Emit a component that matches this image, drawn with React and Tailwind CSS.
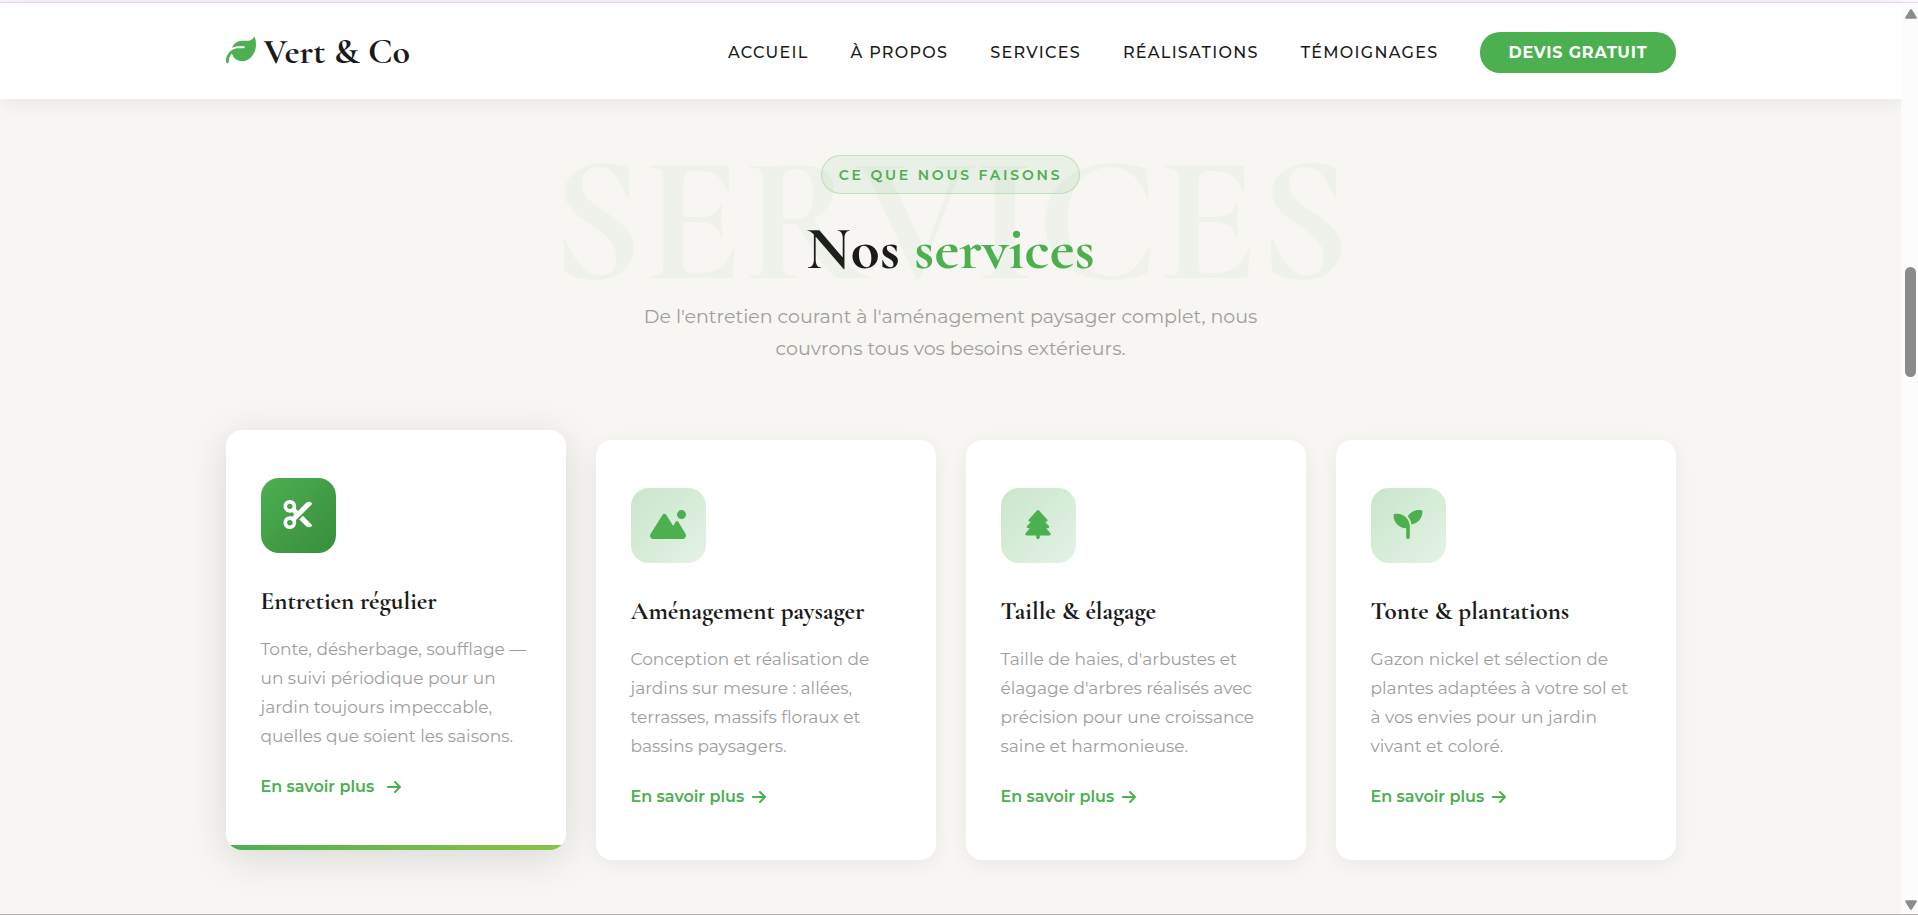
import React from 'react';
import { FaArrowRight, FaLeaf, FaMountainSun, FaScissors, FaSeedling, FaTree } from 'react-icons/fa6';
import clsx from 'clsx';

const NAV = ['Accueil', 'À propos', 'Services', 'Réalisations', 'Témoignages'];

const SERVICES = [
  {
    icon: FaScissors,
    title: 'Entretien régulier',
    text: 'Tonte, désherbage, soufflage — un suivi périodique pour un jardin toujours impeccable, quelles que soient les saisons.',
    active: true,
  },
  {
    icon: FaMountainSun,
    title: 'Aménagement paysager',
    text: 'Conception et réalisation de jardins sur mesure : allées, terrasses, massifs floraux et bassins paysagers.',
  },
  {
    icon: FaTree,
    title: 'Taille & élagage',
    text: "Taille de haies, d'arbustes et élagage d'arbres réalisés avec précision pour une croissance saine et harmonieuse.",
  },
  {
    icon: FaSeedling,
    title: 'Tonte & plantations',
    text: 'Gazon nickel et sélection de plantes adaptées à votre sol et à vos envies pour un jardin vivant et coloré.',
  },
];

function Header() {
  return (
    <header className="relative z-10 bg-white shadow-[0_2px_20px_rgba(0,0,0,0.08)]">
      <div className="mx-auto flex h-24 max-w-[1450px] items-center justify-between pt-[3px]">
        <a href="#accueil" className="flex items-center gap-2 pb-0.5 font-['Cormorant_Garamond','Liberation_Serif',serif] text-[36px] leading-10 font-bold text-[#1a1a1a]">
          <FaLeaf className="mb-1 size-[30px] text-[#4caf50]" />
          Vert &amp; Co
        </a>
        <nav className="flex items-center gap-[42px] text-base leading-[41px] font-medium tracking-[0.08em] text-[#1a1a1a] uppercase">
          {NAV.map((label) => (
            <a key={label} href="#">{label}</a>
          ))}
          <a href="#devis" className="rounded-[20px] bg-[#4caf50] px-7 font-bold tracking-wider text-white">Devis gratuit</a>
        </nav>
      </div>
    </header>
  );
}

function ServiceCard({ icon: Icon, title, text, active }) {
  return (
    <article
      className={clsx(
        'relative overflow-hidden rounded-2xl bg-white px-[35px] pt-12 pb-[50px]',
        active ? '-translate-y-2.5 shadow-[0_8px_40px_rgba(0,0,0,0.12)]' : 'shadow-[0_4px_20px_rgba(0,0,0,0.06)]'
      )}
    >
      <div
        className={clsx(
          'mb-[30px] flex size-[75px] items-center justify-center rounded-[18px] bg-linear-135 pb-0.5',
          active ? 'from-[#4caf50] to-[#388e3c] text-white' : 'from-[#c8e6c9] to-[#e4f3e5] text-[#4caf50]'
        )}
      >
        <Icon className="h-[29px] w-9" />
      </div>
      <h3 className="mb-4 font-['Cormorant_Garamond','Liberation_Serif',serif] text-[25px] leading-9 font-bold text-[#1a1a1a]">{title}</h3>
      <p className="mb-[22px] text-[17px] leading-[29px] text-[#9e9e9e]">{text}</p>
      <a
        href="#"
        className={clsx('flex items-center text-base leading-[27px] font-semibold text-[#4caf50]', active ? 'gap-3' : 'gap-[7px]')}
      >
        En savoir plus <FaArrowRight className="size-4" />
      </a>
      {active && <span className="absolute inset-x-0 bottom-0 h-[5px] bg-linear-to-r from-[#4caf50] to-[#8bc34a]" />}
    </article>
  );
}

function Services() {
  return (
    <section className="relative flex-1 bg-[#f7f6f2] pt-14 pb-[54px]">
      <div className="text-center">
        <span className="inline-block rounded-full border border-[#4caf50]/25 bg-[#4caf50]/8 px-[17px] pt-px align-top text-[14px] leading-9 font-semibold tracking-[0.2em] text-[#4caf50] uppercase">
          Ce que nous faisons
        </span>
        <h2 className="mt-[22px] mb-[19px] font-['Cormorant_Garamond','Liberation_Serif',serif] text-[60px] leading-[66px] font-bold text-[#1a1a1a]">
          Nos <span className="text-[#4caf50]">services</span>
        </h2>
        <p className="mx-auto max-w-[650px] text-[19px] leading-8 text-[#9e9e9e]">
          De l'entretien courant à l'aménagement paysager complet, nous couvrons tous vos besoins extérieurs.
        </p>
      </div>
      <span
        aria-hidden="true"
        className="pointer-events-none absolute top-8 left-1/2 -translate-x-1/2 font-['Cormorant_Garamond','Liberation_Serif',serif] text-[180px] leading-none font-bold text-[#48a868]/5 select-none"
      >
        SERVICES
      </span>
      <div className="mx-auto mt-[75px] grid max-w-[1450px] grid-cols-4 gap-[30px]">
        {SERVICES.map((s) => <ServiceCard key={s.title} {...s} />)}
      </div>
    </section>
  );
}

function Scrollbar() {
  return (
    <div className="flex w-[17px] flex-col items-center bg-[#fcfcfc] pt-1.5 pb-1 pl-0.5">
      <svg viewBox="0 0 12 10" className="h-2.5 w-3 fill-[#8b8b8b]"><path d="M5 .8a1.2 1.2 0 0 1 2 0l4.6 7.2a1.1 1.1 0 0 1-1 1.8H1.4a1.1 1.1 0 0 1-1-1.8z" /></svg>
      <div className="mt-[248px] h-[110px] w-[11px] rounded-full bg-[#8b8b8b]" />
      <svg viewBox="0 0 12 10" className="mt-auto h-2.5 w-3 fill-[#8b8b8b]"><path d="M5 9.2a1.2 1.2 0 0 0 2 0l4.6-7.2a1.1 1.1 0 0 0-1-1.8H1.4a1.1 1.1 0 0 0-1 1.8z" /></svg>
    </div>
  );
}

export default function App() {
  return (
    <div className="flex min-h-screen flex-col border-b border-[#b8b4b4] font-['Montserrat','Inter',sans-serif]">
      <div className="h-[3px] border-b border-[#e8dcf0] bg-[#fcf4ff]" />
      <div className="flex flex-1">
        <main className="flex min-w-0 flex-1 flex-col overflow-x-clip">
          <Header />
          <Services />
        </main>
        <Scrollbar />
      </div>
    </div>
  );
}
